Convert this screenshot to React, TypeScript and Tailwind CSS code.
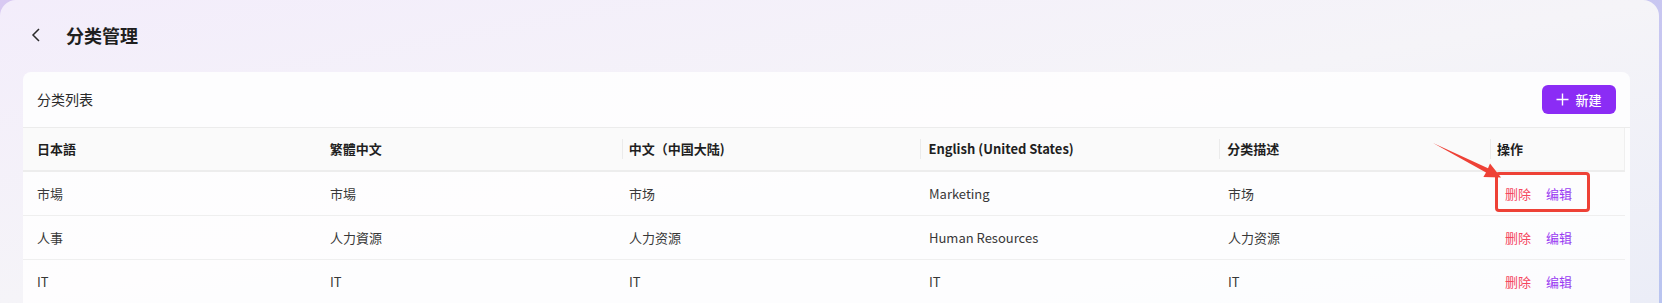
import React from "react";

const cols = [
  { w: "w-[299px]", pl: "pl-[14px]", sep: false },
  { w: "w-[300px]", pl: "pl-[8px]", sep: false },
  { w: "w-[299px]", pl: "pl-[7px]", sep: true },
  { w: "w-[299px]", pl: "pl-[8px]", sep: true },
  { w: "w-[271px]", pl: "pl-[8px]", sep: true },
  { w: "w-[134px]", pl: "pl-[7px]", sep: true },
];

const headers = ["日本語", "繁體中文", "中文（中国大陆)", "English (United States)", "分类描述", "操作"];

const rows = [
  ["市場", "市場", "市场", "Marketing", "市场"],
  ["人事", "人力資源", "人力资源", "Human Resources", "人力资源"],
  ["IT", "IT", "IT", "IT", "IT"],
];

export default function App() {
  return (
    <div
      className="relative h-[303px] w-full overflow-hidden bg-linear-to-br from-[#d8c9f2] to-[#b9c4f0]"
      style={{ fontFamily: '"Noto Sans CJK SC", "Noto Sans", sans-serif' }}
    >
      <div className="mr-[3px] h-full rounded-t-[16px] bg-linear-to-br from-[#f3edfb] via-[#f5f4f8] to-[#ebedf7] pl-[23px] pr-[29px]">
        <div className="flex h-[72px] items-center pb-[2px]">
          <svg width="12" height="16" viewBox="0 0 12 16" className="ml-[7px]" fill="none">
            <path d="M9 2 L3 8 L9 14" stroke="#2a2a2a" strokeWidth="1.5" strokeLinejoin="miter" />
          </svg>
          <h1 className="ml-[24px] text-[18px] font-bold leading-none text-[#1f1f1f]">分类管理</h1>
        </div>
        <div className="rounded-t-[8px] bg-white/85">
          <div className="flex h-[56px] items-center justify-between border-b border-[#ececec] pl-[14px] pr-[14px]">
            <span className="text-[14px] text-[#2a2a2a]">分类列表</span>
            <button className="flex h-[29px] w-[74px] items-center justify-center gap-[6px] rounded-[6px] bg-[#8b2cf5] text-[13px] font-medium text-white">
              <svg width="13" height="13" viewBox="0 0 13 13" fill="none">
                <path d="M6.5 0.5 V12.5 M0.5 6.5 H12.5" stroke="white" strokeWidth="1.4" />
              </svg>
              <span>新建</span>
            </button>
          </div>
          <div className="mr-[5px]">
            <div className="flex h-[44px] items-center border-b-2 border-[#ededed] bg-[#fafafa]">
              {cols.map((c, i) => (
                <div key={i} className={`relative flex h-full items-center ${c.w} ${c.pl}`}>
                  {c.sep && <span className="absolute left-0 top-[11px] h-[20px] w-px bg-[#ebebeb]" />}
                  <span className="text-[13px] font-bold text-[#1f1f1f]">{headers[i]}</span>
                </div>
              ))}
              <span className="h-full w-px bg-[#efefef]" />
            </div>
            {rows.map((r, ri) => (
              <div key={ri} className="flex h-[44px] items-center border-b border-[#efefef]">
                {r.map((t, ci) => (
                  <div key={ci} className={`${cols[ci].w} ${cols[ci].pl} text-[13px] text-[#383838]`}>
                    {t}
                  </div>
                ))}
                <div className={`${cols[5].w} flex gap-[15px] pl-[14px] text-[13px]`}>
                  <span className="text-[#f5475f]">删除</span>
                  <span className="text-[#9a3cf2]">编辑</span>
                </div>
              </div>
            ))}
          </div>
        </div>
      </div>
      <div className="absolute left-[1495px] top-[172px] h-[40px] w-[95px] rounded-[4px] border-[3px] border-[#ee4136]" />
      <svg className="pointer-events-none absolute left-0 top-0" width="1662" height="303">
        <polygon
          points="1433,143 1486,172.5 1483.4,177 1501,177.5 1490,163.5 1488,168.3"
          fill="#ee4136"
        />
      </svg>
    </div>
  );
}
